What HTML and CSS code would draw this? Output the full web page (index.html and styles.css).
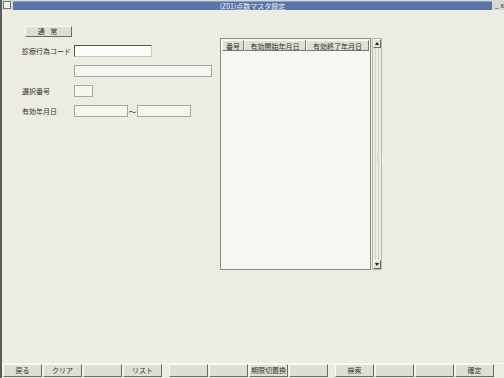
FILE: index.html
```html
<!DOCTYPE html>
<html lang="ja">
<head>
    <meta charset="UTF-8">
    <title>(Z01)点数マスタ設定</title>
    <link rel="stylesheet" href="styles.css">
</head>
<body>
    <div class="window">
        <div class="titlebar">
            <span class="tb-icon"></span>
            <div class="tb-band">(Z01)点数マスタ設定</div>
            <span class="tb-ctrl">_ x</span>
        </div>

        <div class="main">
            <div class="form">
                <button class="btn mode">通 常</button>
                <div class="row">
                    <label class="lbl">診療行為コード</label>
                    <input class="inp code" type="text">
                </div>
                <div class="row">
                    <span class="lbl"></span>
                    <input class="inp name" type="text">
                </div>
                <div class="row">
                    <label class="lbl">選択番号</label>
                    <input class="inp num" type="text">
                </div>
                <div class="row">
                    <label class="lbl">有効年月日</label>
                    <input class="inp date" type="text">
                    <span class="tilde">〜</span>
                    <input class="inp date" type="text">
                </div>
            </div>

            <div class="list">
                <div class="table">
                    <div class="thead">
                        <div class="th c1">番号</div>
                        <div class="th c2">有効開始年月日</div>
                        <div class="th c3">有効終了年月日</div>
                    </div>
                    <div class="tbody"></div>
                </div>
                <div class="scroll">
                    <div class="arrow up"></div>
                    <div class="track"><span class="grip"></span></div>
                    <div class="arrow down"></div>
                </div>
            </div>
        </div>

        <div class="footer">
            <div class="group">
                <button class="btn fbtn">戻る</button>
                <button class="btn fbtn">クリア</button>
                <button class="btn fbtn"></button>
                <button class="btn fbtn">リスト</button>
            </div>
            <div class="group">
                <button class="btn fbtn"></button>
                <button class="btn fbtn"></button>
                <button class="btn fbtn">期限切置換</button>
                <button class="btn fbtn"></button>
            </div>
            <div class="group">
                <button class="btn fbtn">検索</button>
                <button class="btn fbtn"></button>
                <button class="btn fbtn"></button>
                <button class="btn fbtn">確定</button>
            </div>
        </div>
    </div>
</body>
</html>
```

FILE: styles.css
```css
body {
    margin: 0;
    padding: 0;
    width: 504px;
    height: 378px;
    overflow: hidden;
    background-color: #edece2;
    font-family: "Noto Sans CJK JP", "Noto Sans", sans-serif;
    font-size: 7px;
    color: #333;
}
.window {
    height: 378px;
    display: flex;
    flex-direction: column;
    border-left: 2px solid #5c5c5c;
    box-sizing: border-box;
}
.titlebar {
    height: 10px;
    display: flex;
    align-items: center;
    background-color: #d8d8d0;
}
.tb-icon {
    width: 6px;
    height: 6px;
    margin: 0 2px 0 1px;
    border: 1px solid #777;
    background-color: #f2f2f2;
}
.tb-band {
    flex: 1;
    height: 8px;
    line-height: 8px;
    background-color: #5876a9;
    border-top: 1px solid #8aa0c6;
    color: #eef0f6;
    text-align: center;
    font-size: 7px;
}
.tb-ctrl {
    width: 12px;
    font-size: 7px;
    line-height: 8px;
    color: #222;
    text-align: right;
}

.main {
    flex: 1;
    display: flex;
}
.form {
    width: 198px;
    padding: 16px 0 0 20px;
    display: flex;
    flex-direction: column;
    gap: 8px;
}
.btn {
    font-family: inherit;
    font-size: 7px;
    color: #333;
    padding: 0;
    white-space: nowrap;
    background-color: #dfded3;
    border: 1px solid;
    border-color: #fbfbf6 #6c6c66 #6c6c66 #fbfbf6;
    box-sizing: border-box;
}
.mode {
    width: 47px;
    height: 11px;
    line-height: 9px;
    margin-left: 3px;
    letter-spacing: 2px;
}
.row {
    display: flex;
    align-items: center;
    height: 12px;
}
.lbl {
    width: 52px;
    flex: none;
    white-space: nowrap;
}
.inp {
    height: 12px;
    padding: 0 2px;
    border: 1px solid #a8a8a2;
    background-color: #f6f6f1;
    box-sizing: border-box;
    font-size: 7px;
}
.code {
    width: 78px;
    border-color: #555 #c8c8c2 #c8c8c2 #555;
    background-color: #fbfbf8;
}
.name {
    width: 138px;
}
.num {
    width: 19px;
}
.date {
    width: 54px;
}
.tilde {
    width: 9px;
    text-align: center;
    color: #444;
    font-size: 8px;
}

.list {
    display: flex;
    padding-top: 28px;
    height: 232px;
}
.table {
    width: 151px;
    border: 1px solid #8c8c86;
    background-color: #f6f6f2;
    box-sizing: border-box;
}
.thead {
    display: flex;
    height: 12px;
    padding: 1px 1px 0 1px;
}
.th {
    height: 11px;
    line-height: 10px;
    text-align: center;
    white-space: nowrap;
    background-color: #e0dfd5;
    border: 1px solid;
    border-color: #fbfbf6 #77776f #77776f #fbfbf6;
    box-sizing: border-box;
}
.c1 {
    width: 22px;
}
.c2 {
    width: 62px;
}
.c3 {
    flex: 1;
}
.scroll {
    width: 10px;
    margin-left: 1px;
    display: flex;
    flex-direction: column;
    border: 1px solid #b8b8b0;
    box-sizing: border-box;
}
.arrow {
    height: 9px;
    background-color: #e2e1d7;
    border: 1px solid;
    border-color: #fbfbf6 #6c6c66 #6c6c66 #fbfbf6;
    box-sizing: border-box;
    display: flex;
    align-items: center;
    justify-content: center;
}
.arrow.up::after {
    content: "";
    border-left: 2px solid transparent;
    border-right: 2px solid transparent;
    border-bottom: 3px solid #222;
}
.arrow.down::after {
    content: "";
    border-left: 2px solid transparent;
    border-right: 2px solid transparent;
    border-top: 3px solid #222;
}
.track {
    flex: 1;
    margin: 0 2px;
    border-left: 1px solid #d2d2ca;
    border-right: 1px solid #d2d2ca;
    position: relative;
}
.grip {
    position: absolute;
    left: 1px;
    top: 106px;
    width: 2px;
    height: 8px;
    background-color: #d6d6ce;
}

.footer {
    height: 13px;
    display: flex;
    padding: 0 0 1px 1px;
    gap: 7px;
    border-top: 1px solid #f8f8f2;
}
.group {
    display: flex;
    gap: 1px;
}
.fbtn {
    width: 39px;
    height: 13px;
    line-height: 11px;
}
```
